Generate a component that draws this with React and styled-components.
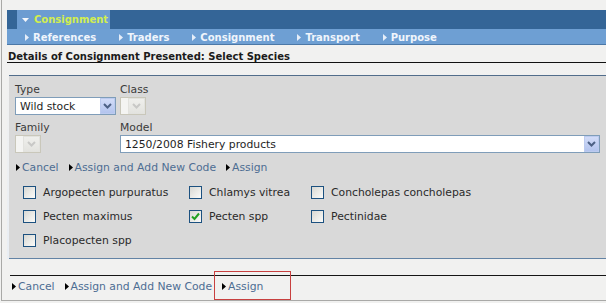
import React from 'react';
import styled, { createGlobalStyle } from 'styled-components';

const Global = createGlobalStyle`
  html, body { margin: 0; padding: 0; background: #f1f1f0; }
  body { font-family: "DejaVu Sans", Verdana, sans-serif; width: 606px; height: 303px; overflow: hidden; }
  * { box-sizing: border-box; }
`;

const Frame = styled.div`
  margin-left: 1px;
  width: 605px;
  height: 301px;
  border-left: 1px solid #a9a9a7;
  border-bottom: 1px solid #a9a9a7;
  padding: 10px 0 0 5px;
  overflow: hidden;
`;

const MainRow = styled.div`
  height: 19px;
  background: #346597;
  display: flex;
  padding-left: 10px;
`;

const ActiveTab = styled.div`
  width: 93px;
  background: #6c9cd1;
  display: flex;
  align-items: center;
  padding-left: 5px;
  gap: 5px;
  color: #d2ee4e;
  font-weight: bold;
  font-size: 10px;
`;

const SubRow = styled.div`
  height: 16px;
  background: #6e9fd3;
  border-bottom: 1px solid #4b78a7;
  display: flex;
  align-items: center;
  padding-left: 18px;
  padding-top: 1px;
  gap: 23px;
`;

const SubTab = styled.div`
  display: flex;
  align-items: center;
  gap: 4px;
  color: #f0f5fc;
  font-weight: bold;
  font-size: 10px;
`;

const Heading = styled.div`
  padding: 5px 0 0 1px;
  height: 18px;
  line-height: 13px;
  border-bottom: 1px solid #111;
  font-weight: bold;
  font-size: 10px;
  color: #1b1b1b;
`;

const PanelWrap = styled.div`
  padding-top: 12px;
  background: linear-gradient(#f1f1f0, #e9eef4);
`;

const Panel = styled.div`
  margin-left: 2px;
  border-top: 1px solid #516d8b;
  border-bottom: 1px solid #6383a5;
  background: #d9d9d9;
  padding: 7px 6px 6px 6px;
`;

const FieldGrid = styled.div`
  display: grid;
  grid-template-columns: 105px 1fr;
  row-gap: 6px;
`;

const Field = styled.div`
  display: flex;
  flex-direction: column;
  align-items: flex-start;
  gap: 1px;
`;

const Label = styled.div`
  font-size: 10.8px;
  line-height: 13px;
  color: #3b3b3b;
`;

const Select = styled.div`
  height: 18px;
  width: ${p => (p.$full ? '100%' : `${p.$w}px`)};
  border: 1px solid ${p => (p.$disabled ? '#c9c7ba' : '#7f9db9')};
  background: ${p => (p.$disabled ? '#f4f4f2' : '#ffffff')};
  display: flex;
  align-items: center;
  font-size: 10.8px;
  color: #1e1e1e;
`;

const SelectValue = styled.span`
  flex: 1;
  padding-left: 4px;
  white-space: nowrap;
  overflow: hidden;
`;

const ArrowButton = styled.span`
  width: ${p => (p.$disabled ? 17 : 15)}px;
  height: 16px;
  display: flex;
  align-items: center;
  justify-content: center;
  border: 1px solid ${p => (p.$disabled ? '#e2e2de' : '#bccbef')};
  background: ${p => (p.$disabled ? 'linear-gradient(#efefec, #e3e3df)' : 'linear-gradient(#d2dcf8, #b3c4ee)')};
`;

const LinkRow = styled.div`
  display: flex;
  align-items: center;
  gap: 10px;
  padding-left: ${p => p.$pad}px;
  margin-top: ${p => p.$mt}px;
  line-height: 13px;
`;

const Link = styled.span`
  display: flex;
  align-items: center;
  gap: 2px;
  font-size: 10.8px;
  color: #4d6d93;
  white-space: nowrap;
`;

const Checks = styled.div`
  display: grid;
  grid-template-columns: 166px 122px 1fr;
  grid-auto-rows: 24px;
  padding-left: 8px;
  margin-top: 6px;
`;

const CheckCell = styled.label`
  display: flex;
  align-items: center;
  gap: 7px;
  font-size: 10.8px;
  color: #2a2a2a;
  white-space: nowrap;
`;

const Box = styled.span`
  width: 13px;
  height: 13px;
  border: 1px solid #1c5180;
  background: linear-gradient(135deg, #d8d8d3, #fbfbf9);
  display: flex;
  align-items: center;
  justify-content: center;
`;

const Footer = styled.div`
  margin-top: 16px;
  margin-left: 3px;
  border-top: 1px solid #151515;
  padding-top: 4px;
  position: relative;
`;

const Highlight = styled.div`
  position: absolute;
  left: 204px;
  top: -5px;
  width: 77px;
  height: 29px;
  border: 1px solid #c8403f;
  pointer-events: none;
`;

const RightTri = ({ color = '#000' }) => (
  <svg width="4" height="7" viewBox="0 0 4 7"><polygon points="0,0 4,3.5 0,7" fill={color} /></svg>
);

const DownTri = () => (
  <svg width="7" height="4" viewBox="0 0 7 4"><polygon points="0,0 7,0 3.5,4" fill="#f4f7fb" /></svg>
);

const Chevron = ({ color }) => (
  <svg width="9" height="6" viewBox="0 0 9 6"><polyline points="1,1 4.5,4.5 8,1" fill="none" stroke={color} strokeWidth="2" /></svg>
);

const Check = () => (
  <svg width="9" height="9" viewBox="0 0 9 9"><polyline points="1,4.5 3.5,7 8,1.5" fill="none" stroke="#21a121" strokeWidth="2" /></svg>
);

const Dropdown = ({ value, w, full, disabled }) => (
  <Select $w={w} $full={full} $disabled={disabled}>
    <SelectValue>{value}</SelectValue>
    <ArrowButton $disabled={disabled}>
      <Chevron color={disabled ? '#c8c8c6' : '#4d6185'} />
    </ArrowButton>
  </Select>
);

const Links = ({ pad, mt }) => (
  <LinkRow $pad={pad} $mt={mt}>
    <Link><RightTri />Cancel</Link>
    <Link><RightTri />Assign and Add New Code</Link>
    <Link><RightTri />Assign</Link>
  </LinkRow>
);

const species = [
  ['Argopecten purpuratus', false],
  ['Chlamys vitrea', false],
  ['Concholepas concholepas', false],
  ['Pecten maximus', false],
  ['Pecten spp', true],
  ['Pectinidae', false],
  ['Placopecten spp', false],
];

const subTabs = ['References', 'Traders', 'Consignment', 'Transport', 'Purpose'];

export default function App() {
  return (
    <>
      <Global />
      <Frame>
        <MainRow>
          <ActiveTab><DownTri />Consignment</ActiveTab>
        </MainRow>
        <SubRow>
          {subTabs.map(t => (
            <SubTab key={t}><RightTri color="#e6eef9" />{t}</SubTab>
          ))}
        </SubRow>
        <Heading>Details of Consignment Presented: Select Species</Heading>
        <PanelWrap>
          <Panel>
            <FieldGrid>
              <Field>
                <Label>Type</Label>
                <Dropdown value="Wild stock" w={101} />
              </Field>
              <Field>
                <Label>Class</Label>
                <Dropdown value="" w={26} disabled />
              </Field>
              <Field>
                <Label>Family</Label>
                <Dropdown value="" w={26} disabled />
              </Field>
              <Field>
                <Label>Model</Label>
                <Dropdown value="1250/2008 Fishery products" full />
              </Field>
            </FieldGrid>
            <Links pad={1} mt={8} />
            <Checks>
              {species.map(([name, checked]) => (
                <CheckCell key={name}>
                  <Box>{checked && <Check />}</Box>
                  {name}
                </CheckCell>
              ))}
            </Checks>
          </Panel>
        </PanelWrap>
        <Footer>
          <Links pad={2} mt={0} />
          <Highlight />
        </Footer>
      </Frame>
    </>
  );
}
